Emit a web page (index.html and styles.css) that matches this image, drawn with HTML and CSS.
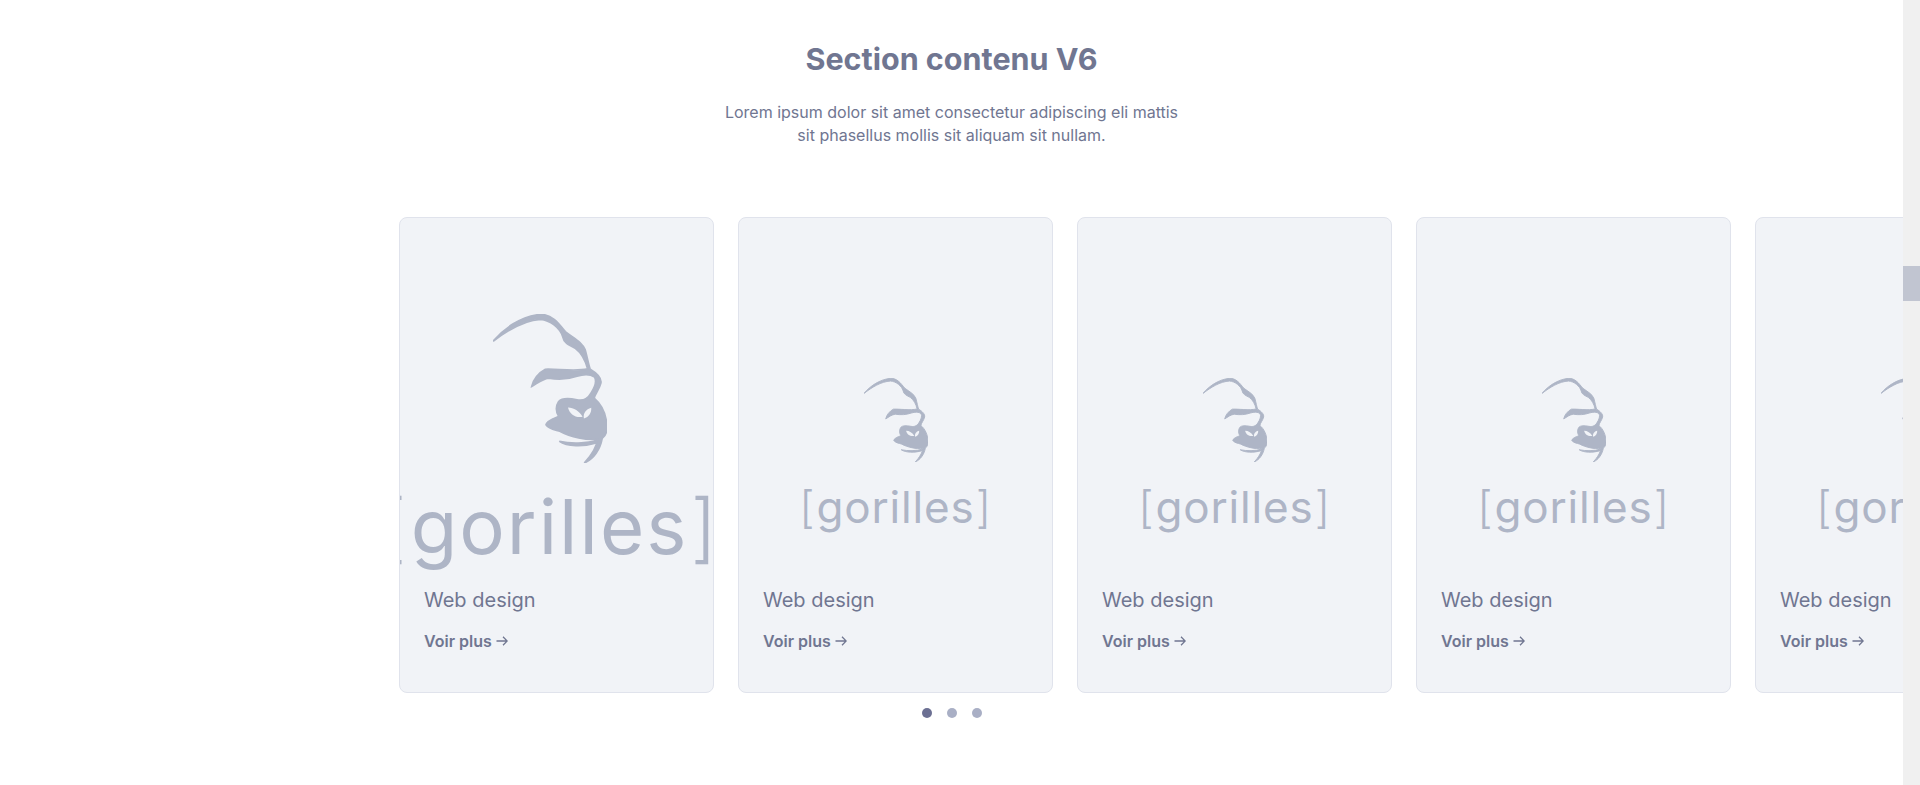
FILE: index.html
```html
<!DOCTYPE html>
<html lang="fr">
<head>
  <meta charset="UTF-8" />
  <meta name="viewport" content="width=device-width, initial-scale=1.0"/>
  <title>Section contenu V6</title>
  <link rel="stylesheet" href="styles.css">
</head>
<body>
  <svg class="defs" width="0" height="0">
    <symbol id="gorilla" viewBox="38 42 342 448">
      <path class="fur" d="M38 124C70 85 120 50 180 43C215 43 235 70 255 95C280 115 305 125 315 150C322 175 325 195 330 208C350 220 365 235 362 250C358 268 345 280 342 295C365 315 380 345 380 385C380 398 376 408 366 416C360 450 340 478 312 490C335 465 350 440 352 418C320 422 270 412 240 395C225 390 205 388 197 375C200 362 220 356 235 350C228 338 224 322 235 305C243 296 262 294 290 300C305 303 322 298 332 280C342 265 350 245 343 232C330 222 312 222 290 229C265 238 235 240 205 235C185 238 172 250 154 260C158 240 175 218 195 208C225 206 285 216 322 207C315 180 305 160 285 145C265 135 250 128 247 110C240 85 210 60 180 58C130 60 80 92 38 124Z"/>
      <path class="nostril" d="M263 323C280 323 298 334 307 351C285 355 268 343 263 323ZM333 324C334 340 326 352 311 356C308 341 317 328 333 324Z"/>
      <path class="fur" d="M237 425C270 432 320 432 351 421L348 430C310 442 260 441 237 425Z"/>
    </symbol>
  </svg>

  <div class="page">
    <main class="section">
      <header class="intro">
        <h2>Section contenu V6</h2>
        <p>Lorem ipsum dolor sit amet consectetur adipiscing eli mattis<br>sit phasellus mollis sit aliquam sit nullam.</p>
      </header>

      <div class="track">
        <article class="card">
          <div class="logo logo-big">
            <svg class="gorilla"><use href="#gorilla"/></svg>
            <span class="wordmark"><i>[</i>gorilles<i>]</i></span>
          </div>
          <h3>Web design</h3>
          <a class="more" href="#">Voir plus
            <svg viewBox="0 0 12 10"><path d="M.5 5h10.500M7 .8l4.200 4.200-4.200 4.200"/></svg>
          </a>
        </article>
        <article class="card">
          <div class="logo">
            <svg class="gorilla"><use href="#gorilla"/></svg>
            <span class="wordmark"><i>[</i>gorilles<i>]</i></span>
          </div>
          <h3>Web design</h3>
          <a class="more" href="#">Voir plus
            <svg viewBox="0 0 12 10"><path d="M.5 5h10.500M7 .8l4.200 4.200-4.200 4.200"/></svg>
          </a>
        </article>
        <article class="card">
          <div class="logo">
            <svg class="gorilla"><use href="#gorilla"/></svg>
            <span class="wordmark"><i>[</i>gorilles<i>]</i></span>
          </div>
          <h3>Web design</h3>
          <a class="more" href="#">Voir plus
            <svg viewBox="0 0 12 10"><path d="M.5 5h10.500M7 .8l4.200 4.200-4.200 4.200"/></svg>
          </a>
        </article>
        <article class="card">
          <div class="logo">
            <svg class="gorilla"><use href="#gorilla"/></svg>
            <span class="wordmark"><i>[</i>gorilles<i>]</i></span>
          </div>
          <h3>Web design</h3>
          <a class="more" href="#">Voir plus
            <svg viewBox="0 0 12 10"><path d="M.5 5h10.500M7 .8l4.200 4.200-4.200 4.200"/></svg>
          </a>
        </article>
        <article class="card">
          <div class="logo">
            <svg class="gorilla"><use href="#gorilla"/></svg>
            <span class="wordmark"><i>[</i>gorilles<i>]</i></span>
          </div>
          <h3>Web design</h3>
          <a class="more" href="#">Voir plus
            <svg viewBox="0 0 12 10"><path d="M.5 5h10.500M7 .8l4.200 4.200-4.200 4.200"/></svg>
          </a>
        </article>
      </div>

      <div class="dots">
        <span class="dot active"></span>
        <span class="dot"></span>
        <span class="dot"></span>
      </div>
    </main>

    <div class="scrollbar"><div class="thumb"></div></div>
  </div>
</body>
</html>
```

FILE: styles.css
```css
* {
  box-sizing: border-box;
}

html, body {
  height: 100%;
  margin: 0;
  overflow: hidden;
}

body {
  font-family: Inter, "Liberation Sans", sans-serif;
  background: #ffffff;
  color: #707691;
}

.defs {
  position: absolute;
}

.page {
  display: flex;
  height: 100%;
}

.section {
  flex: 1;
  min-width: 0;
  overflow: hidden;
}

.intro {
  padding-top: 40px;
  text-align: center;
}

.intro h2 {
  margin: 0;
  font-size: 30.500px;
  line-height: 38px;
  font-weight: 700;
}

.intro p {
  margin: 23px 0 0;
  font-size: 16px;
  line-height: 23px;
}

.track {
  display: flex;
  gap: 24px;
  margin-top: 70px;
  padding-left: 399px;
}

.card {
  flex: 0 0 315px;
  height: 476px;
  display: flex;
  flex-direction: column;
  padding: 0 24px;
  background: #f1f3f7;
  border: 1px solid #e0e3ec;
  border-radius: 8px;
  overflow: hidden;
}

.logo {
  height: 353px;
  display: flex;
  flex-direction: column;
  align-items: center;
  padding-top: 160px;
  color: #aeb5c6;
}

.gorilla {
  width: 64px;
  height: 84px;
  overflow: visible;
}

.fur {
  fill: #aeb5c6;
  stroke: #aeb5c6;
  stroke-width: 5;
}

.nostril {
  fill: #f1f3f7;
}

.wordmark {
  margin-top: 18px;
  font-size: 44px;
  line-height: 54px;
  font-weight: 400;
  letter-spacing: 0.800px;
  white-space: nowrap;
}

.wordmark i {
  font-style: normal;
  font-weight: 300;
  margin: 0 0.03em;
}

.logo-big {
  padding-top: 96px;
  margin-right: 14px;
}

.logo-big .gorilla {
  width: 114px;
  height: 149px;
}

.logo-big .wordmark {
  margin-top: 15px;
  font-size: 76px;
  line-height: 96px;
  letter-spacing: 2px;
}

.card h3 {
  margin: 15px 0 0;
  font-size: 20px;
  line-height: 28px;
  font-weight: 400;
}

.more {
  display: flex;
  align-items: center;
  gap: 4px;
  margin-top: 15px;
  font-size: 16px;
  line-height: 24px;
  font-weight: 600;
  color: #707691;
  text-decoration: none;
}

.more svg {
  width: 12px;
  height: 10px;
  fill: none;
  stroke: #707691;
  stroke-width: 1.3;
}

.dots {
  display: flex;
  justify-content: center;
  gap: 15px;
  margin-top: 15px;
}

.dot {
  width: 10px;
  height: 10px;
  border-radius: 50%;
  background: #a9afc5;
}

.dot.active {
  background: #6c7093;
}

.scrollbar {
  flex: 0 0 17px;
  padding-top: 266px;
  background: #f0f0f0;
}

.thumb {
  height: 35px;
  background: #c1c5d1;
}
```
